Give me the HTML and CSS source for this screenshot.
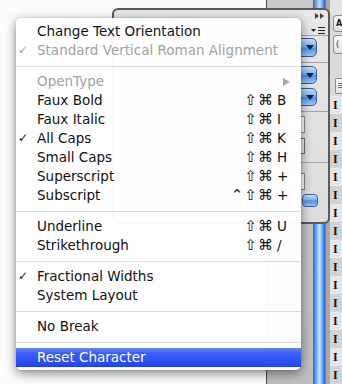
FILE: index.html
```html
<!DOCTYPE html>
<html>
<head>
<meta charset="utf-8">
<link rel="stylesheet" href="styles.css">
</head>
<body>
<div class="desk">
  <div class="doc"></div>
  <div class="divider"></div>
  <div class="mid"></div>
  <div class="scroller"></div>
  <div class="gutter"></div>
  <div class="list">
    <div class="ltop"></div>
    <div class="lbtn lbtn-a">A</div>
    <div class="lbtn lbtn-b">(</div>
    <div class="lgap"></div>
    <div class="lbtn licon">
      <svg width="6" height="9" viewBox="0 0 6 9"><rect x="0" y="1" width="6" height="1" fill="#333"/><rect x="0" y="4" width="6" height="1" fill="#333"/><rect x="0" y="7" width="6" height="1" fill="#333"/></svg>
    </div>
    <div class="lrows">
      <div class="lrow">I</div><div class="lrow alt">I</div>
      <div class="lrow">I</div><div class="lrow alt">I</div>
      <div class="lrow">I</div><div class="lrow alt">I</div>
      <div class="lrow">I</div><div class="lrow alt">I</div>
      <div class="lrow">I</div><div class="lrow alt">I</div>
      <div class="lrow">I</div><div class="lrow alt">I</div>
      <div class="lrow">I</div><div class="lrow alt">I</div>
      <div class="lrow">I</div><div class="lrow alt">I</div>
    </div>
  </div>
</div>

<div class="panel">
  <div class="pbody"></div>
  <div class="pside">
    <div class="ptabs">
      <svg class="pt1" width="9" height="6" viewBox="0 0 9 6"><polygon points="0,0 4,3 0,6" fill="#444"/><polygon points="5,0 9,3 5,6" fill="#444"/></svg>
      <svg class="pt2" width="14" height="7" viewBox="0 0 14 7"><polygon points="0,2 5,2 2.5,5" fill="#222"/><rect x="7" y="0" width="7" height="1" fill="#222"/><rect x="7" y="3" width="7" height="1" fill="#222"/><rect x="7" y="6" width="7" height="1" fill="#222"/></svg>
    </div>
    <div class="pline"></div>
    <div class="dd dd1"></div>
    <div class="pline pl2"></div>
    <div class="dd dd2"></div>
    <div class="dd dd3"></div>
    <div class="pline pl3"></div>
    <div class="field f1"></div>
    <div class="field f2"></div>
    <div class="pline pl4"></div>
    <div class="field f3"></div>
    <div class="stepper"></div>
  </div>
</div>

<div class="menu">
  <div class="item"><span class="chk"></span><span class="lbl">Change Text Orientation</span></div>
  <div class="item dis"><span class="chk">✓</span><span class="lbl">Standard Vertical Roman Alignment</span></div>
  <div class="sep"></div>
  <div class="item dis"><span class="chk"></span><span class="lbl">OpenType</span><span class="arrow"></span></div>
  <div class="item"><span class="chk"></span><span class="lbl">Faux Bold</span><span class="mods">⇧⌘</span><span class="key">B</span></div>
  <div class="item"><span class="chk"></span><span class="lbl">Faux Italic</span><span class="mods">⇧⌘</span><span class="key">I</span></div>
  <div class="item"><span class="chk">✓</span><span class="lbl">All Caps</span><span class="mods">⇧⌘</span><span class="key">K</span></div>
  <div class="item"><span class="chk"></span><span class="lbl">Small Caps</span><span class="mods">⇧⌘</span><span class="key">H</span></div>
  <div class="item"><span class="chk"></span><span class="lbl">Superscript</span><span class="mods">⇧⌘</span><span class="key">+</span></div>
  <div class="item"><span class="chk"></span><span class="lbl">Subscript</span><span class="mods">⌃⇧⌘</span><span class="key">+</span></div>
  <div class="sep"></div>
  <div class="item"><span class="chk"></span><span class="lbl">Underline</span><span class="mods">⇧⌘</span><span class="key">U</span></div>
  <div class="item"><span class="chk"></span><span class="lbl">Strikethrough</span><span class="mods">⇧⌘</span><span class="key">/</span></div>
  <div class="sep"></div>
  <div class="item"><span class="chk">✓</span><span class="lbl">Fractional Widths</span></div>
  <div class="item"><span class="chk"></span><span class="lbl">System Layout</span></div>
  <div class="sep"></div>
  <div class="item"><span class="chk"></span><span class="lbl">No Break</span></div>
  <div class="sep"></div>
  <div class="item sel"><span class="chk"></span><span class="lbl">Reset Character</span></div>
</div>
</body>
</html>
```

FILE: styles.css
```css
* { box-sizing: border-box; }
body {
  margin: 0;
  width: 342px;
  height: 384px;
  overflow: hidden;
  position: relative;
  background: #fff;
  font-family: "DejaVu Sans", "Noto Sans", sans-serif;
}

/* background windows */
.desk { display: flex; height: 384px; }
.doc { width: 266px; background: #fcfcfc; }
.divider { width: 1px; background: #4a4a4a; }
.mid { width: 46px; background: linear-gradient(#c9c9c9, #bfbfbf); }
.scroller {
  width: 12px;
  background: linear-gradient(to right, #2b60c4, #5c98ec 20%, #a6d0ff 45%, #c6e4ff 55%, #67a2f0 80%, #2b60c4);
}
.gutter { width: 5px; background: #a8a8a8; border-left: 1px solid #7d7d7d; }
.list { flex: 1; background: #dadada; display: flex; flex-direction: column; overflow: hidden; }
.ltop { height: 16px; background: #e4e4e4; }
.lbtn {
  margin-left: 3px;
  border: 1px solid #8c8c8c;
  border-right: none;
  border-radius: 4px 0 0 4px;
  background: linear-gradient(#fafafa, #e2e2e2);
  font-size: 8px;
  font-weight: bold;
  color: #222;
  padding-left: 2px;
  display: flex;
  align-items: center;
}
.lbtn-a { height: 18px; }
.lbtn-b { height: 20px; margin-top: 3px; font-weight: normal; }
.lgap { height: 26px; }
.licon { height: 17px; margin-left: 5px; border-radius: 2px 0 0 2px; padding-left: 2px; }
.lrows { margin-top: 2px; }
.lrow {
  height: 18px;
  line-height: 18px;
  padding-left: 3px;
  font-family: "Liberation Serif", serif;
  font-weight: bold;
  font-size: 12px;
  color: #111;
  background: #e6e6e6;
}
.lrow.alt { background: #d2d2d2; }

/* floating panel */
.panel {
  position: absolute;
  left: 112px;
  top: 8px;
  width: 218px;
  height: 216px;
  border: 2px solid #5a5a5a;
  border-radius: 6px;
  background: linear-gradient(#e8e8e8, #dcdcdc);
  display: flex;
}
.pbody { flex: 1; }
.pside { width: 26px; display: flex; flex-direction: column; }
.ptabs { height: 25px; position: relative; }
.pt1 { position: absolute; left: 13px; top: 3px; }
.pt2 { position: absolute; left: 9px; top: 17px; }
.pline { height: 1px; background: #a4a4a4; margin-left: -20px; }
.dd {
  height: 18px;
  margin-left: -6px;
  width: 21px;
  border: 1px solid #3d5c92;
  border-radius: 0 5px 5px 0;
  background: linear-gradient(#c4e0ff, #77b2f2 48%, #4a8ee8 52%, #94caff);
  display: flex;
  align-items: center;
  justify-content: center;
  padding-left: 6px;
}
.dd::after {
  content: "";
  border-top: 5px solid #0f1f48;
  border-left: 4px solid transparent;
  border-right: 4px solid transparent;
}
.dd1 { margin-top: 2px; height: 19px; }
.pl2 { margin-top: 5px; }
.dd2 { margin-top: 3px; }
.dd3 { margin-top: 4px; }
.pl3 { margin-top: 5px; }
.field {
  margin-left: -40px;
  width: 43px;
  height: 17px;
  border: 1px solid #8a8a8a;
  background: #fff;
}
.f1 { margin-top: 4px; }
.f2 { margin-top: 5px; height: 16px; background: #efeaf0; border-color: #7a6a7c; }
.pl4 { margin-top: 8px; }
.f3 { margin-top: 10px; }
.stepper {
  margin-top: 4px;
  height: 13px;
  width: 16px;
  border: 1px solid #3d5c92;
  border-radius: 4px;
  background: linear-gradient(#c4e0ff, #77b2f2 48%, #4a8ee8 52%, #94caff);
}

/* context menu */
.menu {
  position: absolute;
  left: 16px;
  top: 18px;
  width: 285px;
  padding: 4px 0 3px;
  background: rgba(255, 255, 255, 0.96);
  border-radius: 5px;
  box-shadow: 0 3px 11px rgba(0, 0, 0, 0.5), 0 0 1px rgba(0, 0, 0, 0.4);
  font-size: 13.5px;
  color: #111;
}
.item {
  display: flex;
  align-items: center;
  height: 19px;
  line-height: 19px;
  padding-right: 10px;
  white-space: nowrap;
}
.chk { width: 21px; padding-left: 2px; font-size: 12px; flex: none; }
.lbl { flex: 1; }
.mods { margin-right: 3px; font-size: 15px; letter-spacing: 1px; }
.key { width: 14px; flex: none; }
.dis { color: #a2a2a2; }
.arrow {
  width: 0;
  height: 0;
  border-left: 7px solid #a6a6a6;
  border-top: 4.5px solid transparent;
  border-bottom: 4.5px solid transparent;
  margin-right: 1px;
}
.sep { height: 1px; margin: 6px 0 5px; background: #dcdcdc; }
.sel {
  color: #fff;
  background: linear-gradient(#6687f8, #3c61f5 25%, #2b4ff2 75%, #1f42ee);
}
```
